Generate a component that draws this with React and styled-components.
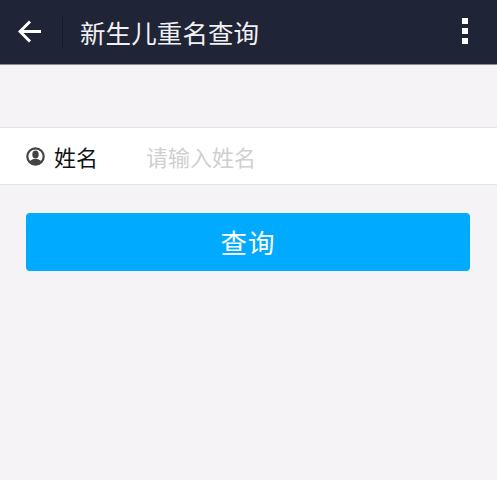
import React from 'react';
import styled, { createGlobalStyle } from 'styled-components';

const GlobalStyle = createGlobalStyle`
  html, body {
    margin: 0;
    padding: 0;
    background: #f5f3f6;
    font-family: "Noto Sans CJK SC", "Liberation Sans", sans-serif;
  }
  * {
    box-sizing: border-box;
  }
`;

const Page = styled.div`
  width: 497px;
  height: 480px;
  overflow: hidden;
  background: #f5f3f6;
`;

const Header = styled.header`
  height: 65px;
  display: flex;
  align-items: center;
  padding-bottom: 2px;
  background: #1f2437;
  border-bottom: 1px solid #8a8c94;
`;

const BackButton = styled.div`
  width: 63px;
  height: 33px;
  display: flex;
  align-items: center;
  padding-left: 18px;
  border-right: 1px solid #171b2a;
`;

const Title = styled.h1`
  flex: 1;
  margin: 0 0 0 17px;
  font-size: 25.5px;
  font-weight: 400;
  line-height: 33px;
  letter-spacing: 0.1px;
  color: #f1f1f3;
`;

const MenuDots = styled.div`
  display: flex;
  flex-direction: column;
  gap: 4px;
  margin-right: 29px;
`;

const Dot = styled.span`
  width: 6px;
  height: 6px;
  background: #fff;
`;

const Form = styled.section`
  margin-top: 62px;
  height: 58px;
  display: flex;
  align-items: center;
  padding-left: 26px;
  background: #fff;
  border-top: 1px solid #e3e3e5;
  border-bottom: 1px solid #e3e3e5;
`;

const Label = styled.label`
  width: 120px;
  display: flex;
  align-items: center;
  gap: 9px;
  font-size: 22px;
  color: #111;
`;

const NameInput = styled.input`
  flex: 1;
  min-width: 0;
  border: none;
  outline: none;
  padding: 0;
  font-family: inherit;
  font-size: 22px;
  background: transparent;

  &::placeholder {
    color: #d0d0d0;
    opacity: 1;
  }
`;

const SubmitButton = styled.button`
  display: block;
  width: 444px;
  height: 58px;
  margin: 28px 0 0 26px;
  padding: 0 0 2px;
  border: none;
  border-radius: 4px;
  background: #00aaff;
  color: #fff;
  font-family: inherit;
  font-size: 26.5px;
  letter-spacing: 1px;
`;

const BackIcon = () => (
  <svg width="24" height="23" viewBox="0 0 24 23" fill="none" stroke="#fff" strokeWidth="3">
    <path d="M2 11.5H23M12 1.5L2 11.5L12 21.5" />
  </svg>
);

const UserIcon = () => (
  <svg width="19" height="19" viewBox="0 0 19 19">
    <circle cx="9.5" cy="9.5" r="8.2" fill="#fff" stroke="#444" strokeWidth="2.2" />
    <ellipse cx="9.5" cy="7.5" rx="3.2" ry="3.9" fill="#444" />
    <path d="M3 15C5 12.5 7.5 12 9.5 12C11.5 12 14 12.5 16 15C13 18.5 6 18.5 3 15Z" fill="#444" />
  </svg>
);

const App = () => {
  return (
    <Page>
      <GlobalStyle />
      <Header>
        <BackButton>
          <BackIcon />
        </BackButton>
        <Title>新生儿重名查询</Title>
        <MenuDots>
          <Dot />
          <Dot />
          <Dot />
        </MenuDots>
      </Header>
      <Form>
        <Label>
          <UserIcon />
          姓名
        </Label>
        <NameInput placeholder="请输入姓名" />
      </Form>
      <SubmitButton>查询</SubmitButton>
    </Page>
  );
};

export default App;
